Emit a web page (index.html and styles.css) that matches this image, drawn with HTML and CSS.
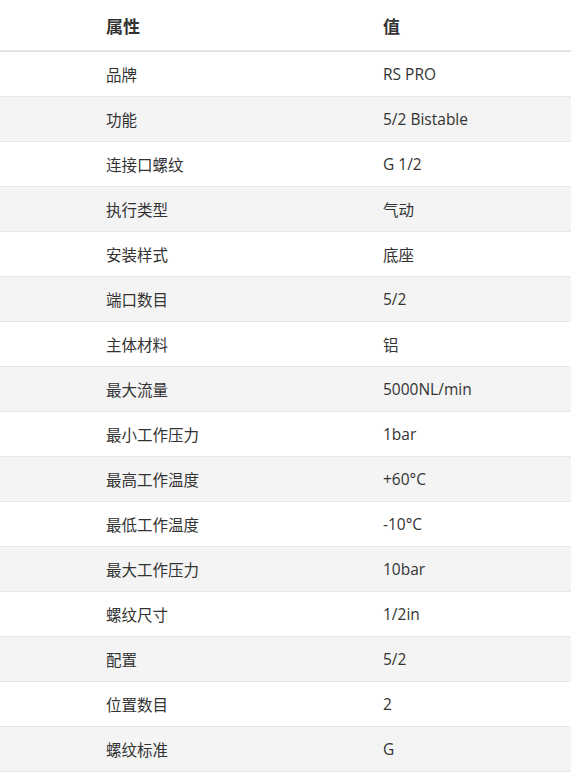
FILE: index.html
```html
<!DOCTYPE html>
<html lang="zh">
<head>
<meta charset="utf-8">
<link rel="stylesheet" href="styles.css">
</head>
<body>
<table class="spec">
  <thead>
    <tr><th>属性</th><th>值</th></tr>
  </thead>
  <tbody>
    <tr><td>品牌</td><td>RS PRO</td></tr>
    <tr><td>功能</td><td>5/2 Bistable</td></tr>
    <tr><td>连接口螺纹</td><td>G 1/2</td></tr>
    <tr><td>执行类型</td><td>气动</td></tr>
    <tr><td>安装样式</td><td>底座</td></tr>
    <tr><td>端口数目</td><td>5/2</td></tr>
    <tr><td>主体材料</td><td>铝</td></tr>
    <tr><td>最大流量</td><td>5000NL/min</td></tr>
    <tr><td>最小工作压力</td><td>1bar</td></tr>
    <tr><td>最高工作温度</td><td>+60°C</td></tr>
    <tr><td>最低工作温度</td><td>-10°C</td></tr>
    <tr><td>最大工作压力</td><td>10bar</td></tr>
    <tr><td>螺纹尺寸</td><td>1/2in</td></tr>
    <tr><td>配置</td><td>5/2</td></tr>
    <tr><td>位置数目</td><td>2</td></tr>
    <tr><td>螺纹标准</td><td>G</td></tr>
  </tbody>
</table>
</body>
</html>
```
FILE: styles.css
```css
html, body {
  margin: 0;
  padding: 0;
  background: #fff;
}
body {
  font-family: "Open Sans", "Noto Sans CJK SC", sans-serif;
  color: #333;
  font-size: 15.5px;
}
.spec {
  width: 571px;
  border-collapse: collapse;
  table-layout: fixed;
}
.spec th {
  height: 50px;
  padding: 0 0 0 106px;
  text-align: left;
  font-size: 17px;
  font-weight: 700;
  color: #333;
  border-bottom: 2px solid #e4e4e4;
  vertical-align: middle;
}
.spec th:first-child {
  width: 171px;
}
.spec td {
  height: 44px;
  padding: 0 0 0 106px;
  border-bottom: 1px solid #e8e8e8;
  vertical-align: middle;
  font-weight: 400;
}
.spec tbody tr:nth-child(even) td {
  background: #f4f4f4;
}
```
